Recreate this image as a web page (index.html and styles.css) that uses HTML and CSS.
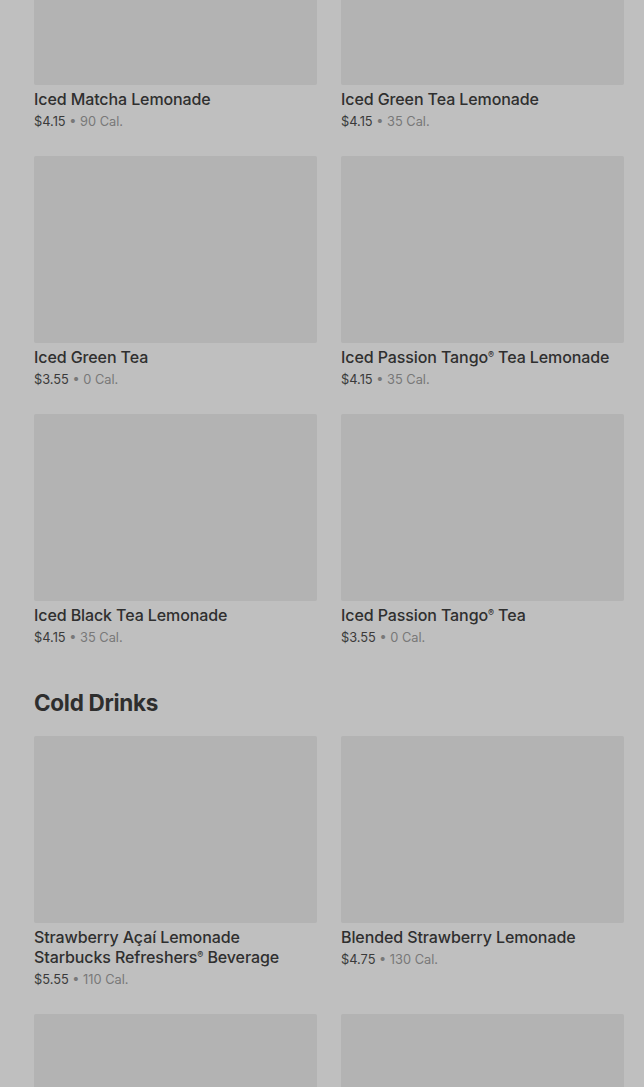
FILE: index.html
```html
<!DOCTYPE html>
<html lang="en">
<head>
  <meta charset="UTF-8" />
  <title>Menu</title>
  <link rel="stylesheet" href="styles.css">
</head>
<body>
  <main class="menu">
    <section class="section">
      <div class="grid">
        <div class="item">
          <div class="thumb"></div>
          <div class="name">Iced Matcha Lemonade</div>
          <div class="meta"><span class="price">$4.15</span> • 90 Cal.</div>
        </div>
        <div class="item">
          <div class="thumb"></div>
          <div class="name">Iced Green Tea Lemonade</div>
          <div class="meta"><span class="price">$4.15</span> • 35 Cal.</div>
        </div>
        <div class="item">
          <div class="thumb"></div>
          <div class="name">Iced Green Tea</div>
          <div class="meta"><span class="price">$3.55</span> • 0 Cal.</div>
        </div>
        <div class="item">
          <div class="thumb"></div>
          <div class="name">Iced Passion Tango<span class="reg">®</span> Tea Lemonade</div>
          <div class="meta"><span class="price">$4.15</span> • 35 Cal.</div>
        </div>
        <div class="item">
          <div class="thumb"></div>
          <div class="name">Iced Black Tea Lemonade</div>
          <div class="meta"><span class="price">$4.15</span> • 35 Cal.</div>
        </div>
        <div class="item">
          <div class="thumb"></div>
          <div class="name">Iced Passion Tango<span class="reg">®</span> Tea</div>
          <div class="meta"><span class="price">$3.55</span> • 0 Cal.</div>
        </div>
      </div>
    </section>

    <section class="section">
      <h2>Cold Drinks</h2>
      <div class="grid">
        <div class="item">
          <div class="thumb"></div>
          <div class="name"><span class="line">Strawberry Açaí Lemonade</span> <span class="line">Starbucks Refreshers<span class="reg">®</span> Beverage</span></div>
          <div class="meta"><span class="price">$5.55</span> • 110 Cal.</div>
        </div>
        <div class="item">
          <div class="thumb"></div>
          <div class="name">Blended Strawberry Lemonade</div>
          <div class="meta"><span class="price">$4.75</span> • 130 Cal.</div>
        </div>
        <div class="item">
          <div class="thumb"></div>
        </div>
        <div class="item">
          <div class="thumb"></div>
        </div>
      </div>
    </section>
  </main>
</body>
</html>
```

FILE: styles.css
```css
body {
  margin: 0;
  background: #bfbfbf;
  font-family: Inter, "Noto Sans", Arial, sans-serif;
  overflow: hidden;
}

.menu {
  margin-top: -102px;
  padding: 0 20px 0 34px;
}

.section h2 {
  margin: 39px 0 17px;
  font-size: 22.5px;
  line-height: 32px;
  font-weight: 700;
  letter-spacing: -0.3px;
  color: #2e2e2e;
}

.grid {
  display: grid;
  grid-template-columns: 1fr 1fr;
  column-gap: 24px;
  row-gap: 24px;
}

.thumb {
  height: 187px;
  background: #b3b3b3;
  border-radius: 2px;
}

.name {
  margin-top: 4px;
  font-size: 16px;
  line-height: 20px;
  font-weight: 500;
  letter-spacing: -0.1px;
  color: #2f2f2f;
}

.name .line {
  white-space: nowrap;
}

.reg {
  font-size: 9px;
  line-height: 1;
  vertical-align: 5px;
}

.meta {
  margin-top: 2px;
  font-size: 12.8px;
  line-height: 21px;
  color: #787878;
}

.price {
  color: #3a3a3a;
}
```
